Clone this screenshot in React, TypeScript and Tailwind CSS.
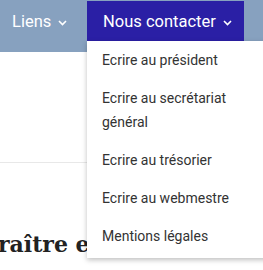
const links = [
  "Ecrire au président",
  "Ecrire au secrétariat général",
  "Ecrire au trésorier",
  "Ecrire au webmestre",
  "Mentions légales",
];

function Chevron() {
  return (
    <svg width="9" height="6" viewBox="0 0 9 6" className="mt-[2px]">
      <polyline
        points="1,1 4.5,4.5 8,1"
        fill="none"
        stroke="currentColor"
        strokeWidth="1.6"
      />
    </svg>
  );
}

export default function App() {
  return (
    <div className="relative h-[270px] w-[263px] overflow-hidden bg-white font-['Roboto',sans-serif]">
      {/* nav bar */}
      <div className="relative z-10 flex h-[52px] items-start bg-[#87a1bf] pt-px">
        <div className="flex h-[40px] w-[87px] items-center gap-[7px] pl-[12px] pt-[2px] text-[16.5px] text-white">
          Liens
          <Chevron />
        </div>
        <div className="relative">
          <div className="flex h-[40px] w-[157px] items-center gap-[7px] bg-[#2a1fa5] pl-[16px] pt-[2px] text-[16.5px] text-white">
            Nous contacter
            <Chevron />
          </div>
          {/* dropdown */}
          <ul className="absolute left-0 top-[40px] w-[200px] bg-white pb-[3px] shadow-[0_2px_5px_rgba(0,0,0,0.25)]">
            {links.map((l) => (
              <li
                key={l}
                className="px-[15px] py-[7px] text-[14px] leading-[24px] text-[#333]"
              >
                {l}
              </li>
            ))}
          </ul>
        </div>
      </div>

      {/* page body */}
      <div className="mt-[110px] border-t border-[#e8e8e8]" />
      <h1 className="-ml-[2px] mt-[70px] whitespace-nowrap font-['DejaVu_Serif',serif] text-[22px] font-bold leading-none text-[#222]">
        raître en
      </h1>
    </div>
  );
}
